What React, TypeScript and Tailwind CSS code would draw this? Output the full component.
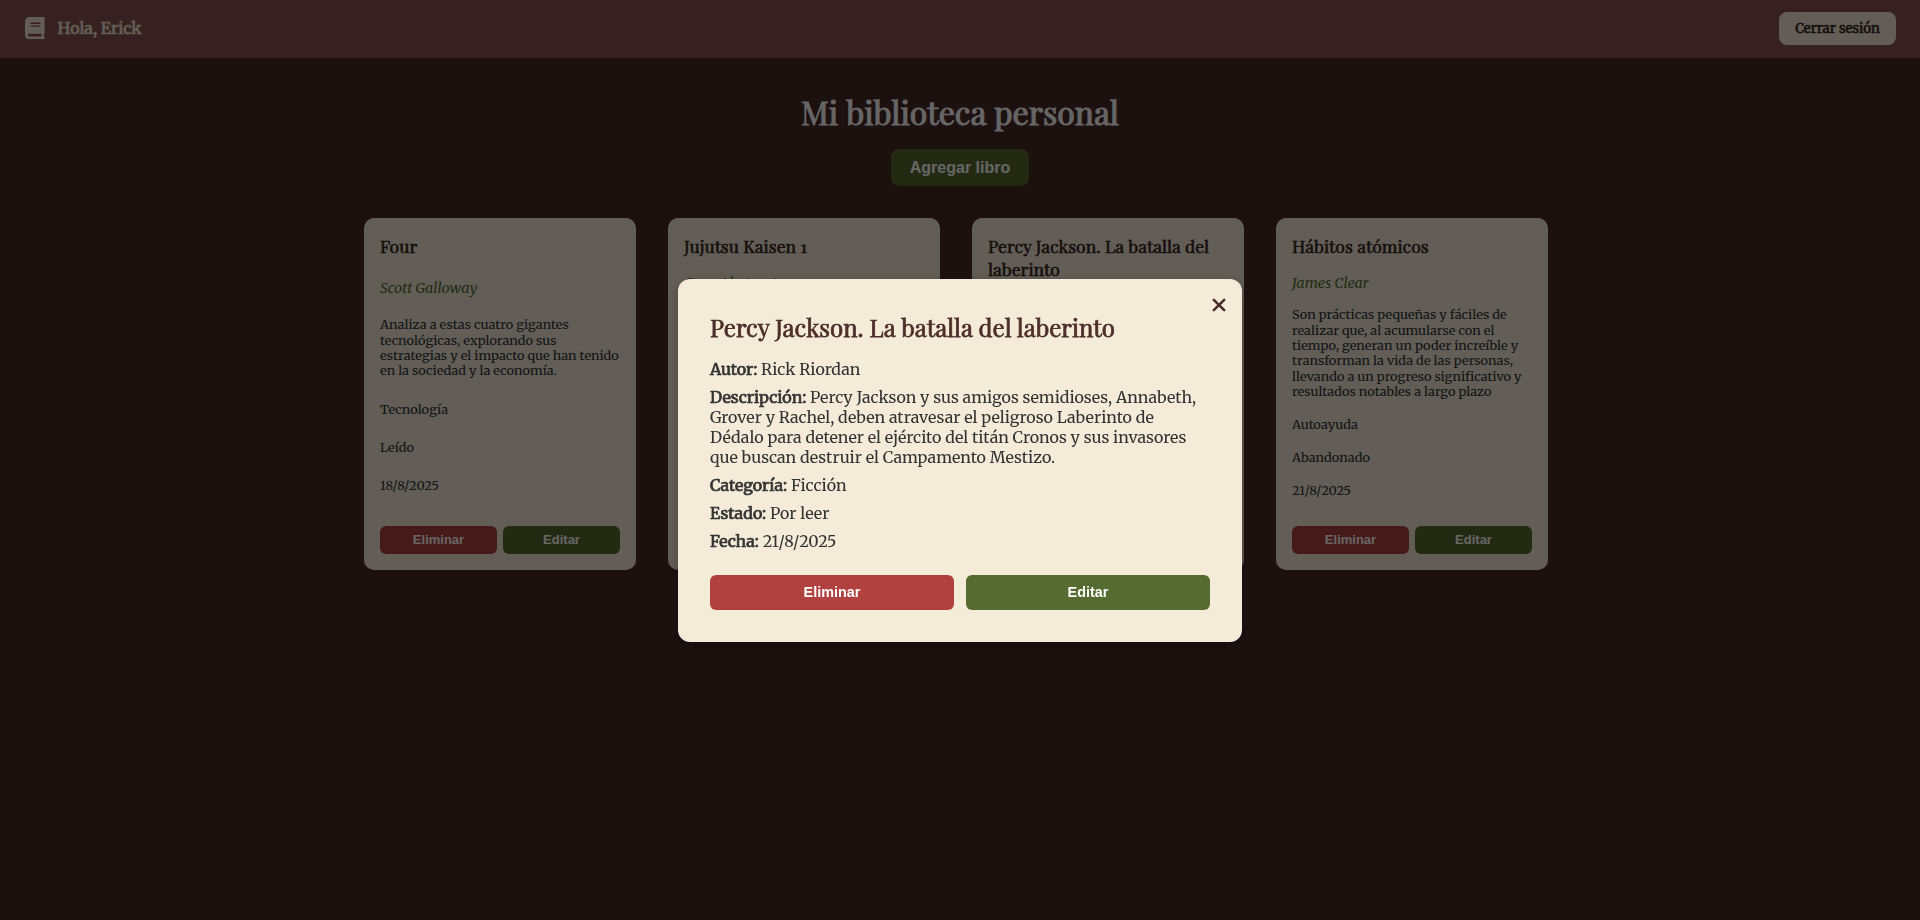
import type { ReactNode } from "react";

type Book = {
  title: string;
  author: string;
  description: string[];
  category: string;
  status: string;
  date: string;
  gaps: { author: string; description: string; category: string; row: string };
};

const wide = { author: "mt-[23px]", description: "mt-[20px]", category: "mt-[23.6px]", row: "mt-[22.64px]" };
const tight = { author: "mt-[18px]", description: "mt-[15px]", category: "mt-[17.8px]", row: "mt-[17.64px]" };

const books: Book[] = [
  {
    title: "Four",
    author: "Scott Galloway",
    description: [
      "Analiza a estas cuatro gigantes",
      "tecnológicas, explorando sus",
      "estrategias y el impacto que han tenido",
      "en la sociedad y la economía.",
    ],
    category: "Tecnología",
    status: "Leído",
    date: "18/8/2025",
    gaps: wide,
  },
  {
    title: "Jujutsu Kaisen 1",
    author: "Gege Akutami",
    description: [],
    category: "",
    status: "",
    date: "",
    gaps: tight,
  },
  {
    title: "Percy Jackson. La batalla del laberinto",
    author: "",
    description: [],
    category: "",
    status: "",
    date: "",
    gaps: tight,
  },
  {
    title: "Hábitos atómicos",
    author: "James Clear",
    description: [
      "Son prácticas pequeñas y fáciles de",
      "realizar que, al acumularse con el",
      "tiempo, generan un poder increíble y",
      "transforman la vida de las personas,",
      "llevando a un progreso significativo y",
      "resultados notables a largo plazo",
    ],
    category: "Autoayuda",
    status: "Abandonado",
    date: "21/8/2025",
    gaps: tight,
  },
];

const display = "font-['Playfair_Display','Liberation_Serif',serif] font-normal";
const sans = "font-['Liberation_Sans',Arial,sans-serif] font-bold";

function BookIcon() {
  return (
    <svg viewBox="0 0 448 512" className="h-[22.4px] w-[19.6px] fill-[#f4ebd9]" aria-hidden="true">
      <path d="M448 360V24c0-13.300-10.700-24-24-24H96C43 0 0 43 0 96v320c0 53 43 96 96 96h328c13.300 0 24-10.700 24-24v-16c0-7.500-3.500-14.300-8.900-18.700-4.200-15.400-4.200-59.300 0-74.700 5.400-4.300 8.900-11.100 8.900-18.600zM128 134c0-3.300 2.700-6 6-6h212c3.300 0 6 2.700 6 6v20c0 3.300-2.700 6-6 6H134c-3.300 0-6-2.700-6-6v-20zm0 64c0-3.300 2.700-6 6-6h212c3.300 0 6 2.700 6 6v20c0 3.300-2.700 6-6 6H134c-3.300 0-6-2.700-6-6v-20zm253.400 250H96c-17.700 0-32-14.300-32-32 0-17.600 14.400-32 32-32h285.400c-1.900 17.100-1.900 46.900 0 64z" />
    </svg>
  );
}

function Card({ book }: { book: Book }) {
  return (
    <article className="flex h-[352px] w-[272px] flex-col rounded-[10px] bg-[#f4ebd9] p-4 text-[12.8px] leading-[15.36px] text-[#333333]">
      <h2 className={`${display} text-[17.6px] leading-[23px] text-[#3b241c] [-webkit-text-stroke:0.6px]`}>{book.title}</h2>
      <p className={`${book.gaps.author} text-[14.4px] leading-[17.28px] text-[#556b2f] italic`}>{book.author}</p>
      <div className={book.gaps.description}>
        {book.description.map((line) => (
          <p key={line} className="whitespace-nowrap">{line}</p>
        ))}
      </div>
      <p className={book.gaps.category}>{book.category}</p>
      <p className={book.gaps.row}>{book.status}</p>
      <p className={book.gaps.row}>{book.date}</p>
      <div className="mt-auto grid grid-cols-2 gap-1.5">
        <button className={`${sans} h-7 rounded-md bg-[#b0413e] text-[13px] text-white`}>Eliminar</button>
        <button className={`${sans} h-7 rounded-md bg-[#556b2f] text-[13px] text-white`}>Editar</button>
      </div>
    </article>
  );
}

function Field({ label, children }: { label: string; children: ReactNode }) {
  return (
    <p className="mb-2 leading-5">
      <span className="[-webkit-text-stroke:0.65px]">{label}</span> {children}
    </p>
  );
}

function Modal() {
  return (
    <div className="fixed inset-0 flex items-center justify-center bg-black/60">
      <section className="relative h-[363px] w-[564px] rounded-xl bg-[#f4ebd9] p-8 text-[#333333] shadow-[0_4px_12px_rgba(0,0,0,0.3)]">
        <button aria-label="Cerrar" className="absolute top-[18.5px] right-[15.5px] text-[#4a2c2a]">
          <svg viewBox="0 0 16 16" className="size-4" fill="none" stroke="currentColor" strokeWidth="2.6" strokeLinecap="round">
            <path d="M2.800 2.800l10.400 10.400M13.200 2.800L2.800 13.200" />
          </svg>
        </button>
        <h2 className={`${display} mb-4 text-2xl leading-8 text-[#4e2f28] [-webkit-text-stroke:0.75px]`}>
          Percy Jackson. La batalla del laberinto
        </h2>
        <Field label="Autor:">Rick Riordan</Field>
        <Field label="Descripción:">
          Percy Jackson y sus amigos semidioses, Annabeth,
          <br />
          Grover y Rachel, deben atravesar el peligroso Laberinto de
          <br />
          Dédalo para detener el ejército del titán Cronos y sus invasores
          <br />
          que buscan destruir el Campamento Mestizo.
        </Field>
        <Field label="Categoría:">Ficción</Field>
        <Field label="Estado:">Por leer</Field>
        <Field label="Fecha:">21/8/2025</Field>
        <div className="mt-6 grid grid-cols-2 gap-3">
          <button className={`${sans} h-[35px] rounded-md bg-[#b0413e] pt-0.5 text-[14.4px] text-white`}>Eliminar</button>
          <button className={`${sans} h-[35px] rounded-md bg-[#556b2f] pt-0.5 text-[14.4px] text-white`}>Editar</button>
        </div>
      </section>
    </div>
  );
}

export default function App() {
  return (
    <div className="min-h-screen bg-[#4a2c2a] font-[Merriweather,'Liberation_Serif',serif]">
      <header className="flex h-[58px] items-start justify-between bg-[#8a5350] pt-3 pr-6 pl-[25.3px]">
        <div className="flex h-8 items-center gap-[12.7px] text-[#f4ebd9]">
          <BookIcon />
          <span className="text-base leading-5 [-webkit-text-stroke:0.65px]">Hola, Erick</span>
        </div>
        <button className="h-[33px] w-[117px] rounded-lg bg-[#f4ebd9] text-[13.333px] text-[#3b241c] [-webkit-text-stroke:0.55px]">
          Cerrar sesión
        </button>
      </header>
      <main className="flex flex-col items-center pt-8">
        <h1 className={`${display} text-[32px] leading-[43px] text-white [-webkit-text-stroke:1px]`}>Mi biblioteca personal</h1>
        <button className={`${sans} mt-4 h-[37px] w-[138px] rounded-lg bg-[#556b2f] text-base text-white`}>Agregar libro</button>
        <div className="mt-8 mr-2 flex gap-8">
          {books.map((book) => (
            <Card key={book.title} book={book} />
          ))}
        </div>
      </main>
      <Modal />
    </div>
  );
}
